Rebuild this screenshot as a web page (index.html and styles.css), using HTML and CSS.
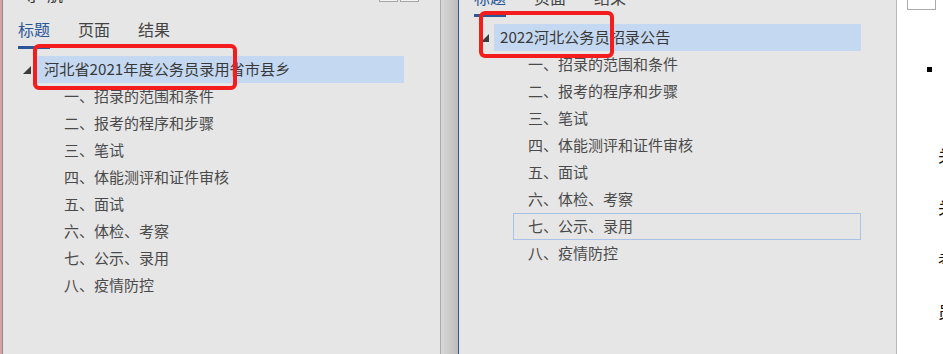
FILE: index.html
```html
<!DOCTYPE html>
<html lang="zh-CN">
<head>
  <meta charset="UTF-8">
  <meta name="viewport" content="width=device-width, initial-scale=1.0">
  <title>导航</title>
  <link rel="stylesheet" href="styles.css">
</head>
<body>
  <div class="screen">
    <div class="desk-edge"></div>

    <!-- 左侧导航窗格 -->
    <section class="nav-pane">
      <header class="pane-head">
        <span class="pane-title">导航</span>
        <span class="pane-btns"><span class="pane-btn"></span><span class="pane-btn"></span></span>
      </header>
      <nav class="tabs">
        <span class="tab active">标题</span>
        <span class="tab">页面</span>
        <span class="tab">结果</span>
      </nav>
      <ul class="tree">
        <li class="node-head"><span class="twisty"></span><span class="label">河北省2021年度公务员录用省市县乡</span></li>
        <li class="node">一、招录的范围和条件</li>
        <li class="node">二、报考的程序和步骤</li>
        <li class="node">三、笔试</li>
        <li class="node">四、体能测评和证件审核</li>
        <li class="node">五、面试</li>
        <li class="node">六、体检、考察</li>
        <li class="node">七、公示、录用</li>
        <li class="node">八、疫情防控</li>
      </ul>
    </section>

    <div class="splitter"></div>

    <!-- 右侧导航窗格（已向下滚动） -->
    <section class="nav-pane scrolled">
      <header class="pane-head">
        <span class="pane-title">导航</span>
        <span class="pane-btns"><span class="pane-btn"></span><span class="pane-btn"></span></span>
      </header>
      <nav class="tabs">
        <span class="tab active">标题</span>
        <span class="tab">页面</span>
        <span class="tab">结果</span>
      </nav>
      <ul class="tree tree-deep">
        <li class="node-head"><span class="twisty"></span><span class="label">2022河北公务员招录公告</span></li>
        <li class="node">一、招录的范围和条件</li>
        <li class="node">二、报考的程序和步骤</li>
        <li class="node">三、笔试</li>
        <li class="node">四、体能测评和证件审核</li>
        <li class="node">五、面试</li>
        <li class="node">六、体检、考察</li>
        <li class="node hover">七、公示、录用</li>
        <li class="node">八、疫情防控</li>
      </ul>
    </section>

    <div class="doc">
      <div class="doc-box"></div>
      <div class="doc-bullet"></div>
      <div class="doc-text">
        <p>关</p>
        <p>关</p>
        <p>考</p>
        <p>员</p>
      </div>
    </div>

    <!-- 红框标注 -->
    <div class="mark mark-a"></div>
    <div class="mark mark-b"></div>
  </div>
</body>
</html>
```

FILE: styles.css
```css
body {
  margin: 0;
  font-family: "Noto Sans CJK SC", "Microsoft YaHei", sans-serif;
  color: #4a4a4a;
}
.screen {
  position: relative;
  display: flex;
  width: 943px;
  height: 354px;
  overflow: hidden;
}
.desk-edge {
  width: 2px;
  background-color: #d6a4a4;
  border-right: 1px solid #8c8c8c;
}
.nav-pane {
  width: 437px;
  flex: none;
  background-color: #e6e6e6;
  overflow: hidden;
}
.pane-head {
  display: flex;
  justify-content: space-between;
  height: 20px;
  margin-top: -16px;
  padding: 0 21px 0 20px;
}
.scrolled .pane-head {
  margin-top: -48px;
}
.pane-title {
  font-size: 16px;
  line-height: 20px;
  letter-spacing: 8px;
  color: #333;
}
.pane-btns {
  display: flex;
  gap: 2px;
  align-self: flex-end;
  margin-bottom: 2px;
}
.pane-btn {
  width: 17px;
  height: 12px;
  background-color: #f3f3f3;
  border: 1px solid #a6a6a6;
}
.tabs {
  display: flex;
  gap: 28px;
  margin-top: 15px;
  padding-left: 15px;
}
.tab {
  font-size: 16px;
  line-height: 20px;
  padding-bottom: 7px;
  border-bottom: 3px solid transparent;
  color: #444;
}
.tab.active {
  color: #2b579a;
  border-bottom-color: #2b579a;
}
.tree {
  list-style: none;
  margin: 7px 0 0;
  padding: 0;
}
.node-head {
  display: flex;
  align-items: center;
  height: 27px;
  padding: 0 36px 0 20px;
}
.twisty {
  width: 14px;
  height: 27px;
  display: flex;
  align-items: center;
}
.twisty::before {
  content: "";
  width: 0;
  height: 0;
  border-left: 8px solid transparent;
  border-bottom: 8px solid #3c3c3c;
}
.label {
  flex: 1;
  box-sizing: border-box;
  height: 27px;
  line-height: 25px;
  padding: 0 0 2px 7px;
  font-size: 15.2px;
  color: #383838;
  background-color: #c5d8f1;
  white-space: nowrap;
}
.tree-deep .node-head {
  padding-left: 22px;
  padding-right: 35px;
}
.tree-deep .twisty {
  width: 13px;
}
.tree-deep .label {
  padding-left: 6px;
}
.node {
  box-sizing: border-box;
  height: 27px;
  line-height: 24px;
  margin: 0 35px 0 46px;
  padding: 0 0 1px 14px;
  border: 1px solid transparent;
  font-size: 15px;
  white-space: nowrap;
}
.tree-deep .node {
  margin-left: 54px;
}
.node.hover {
  border-color: #a9c3e8;
}
.splitter {
  width: 17px;
  flex: none;
  border-left: 1px solid #acacac;
  border-right: 1px solid #2b579a;
  background: linear-gradient(to right, #d8d8d8, #bdbdbd);
}
.doc {
  flex: 1;
  background-color: #fff;
  border-left: 1px solid #b9b9b9;
  overflow: hidden;
}
.doc-box {
  width: 29px;
  height: 10px;
  margin-left: 10px;
  box-sizing: border-box;
  border: 1px solid #ababab;
  border-top: none;
}
.doc-bullet {
  width: 5px;
  height: 5px;
  margin: 57px 0 0 30px;
  background-color: #000;
}
.doc-text {
  margin-top: 57px;
  padding-left: 41px;
  font-size: 16px;
  color: #111;
  white-space: nowrap;
}
.doc-text p {
  margin: 0;
  line-height: 52px;
}
.mark {
  position: absolute;
  box-sizing: border-box;
  border: 4px solid #f41d1d;
  border-radius: 6px;
}
.mark-a {
  left: 33px;
  top: 44px;
  width: 204px;
  height: 46px;
}
.mark-b {
  left: 479px;
  top: 11px;
  width: 135px;
  height: 47px;
}
```
